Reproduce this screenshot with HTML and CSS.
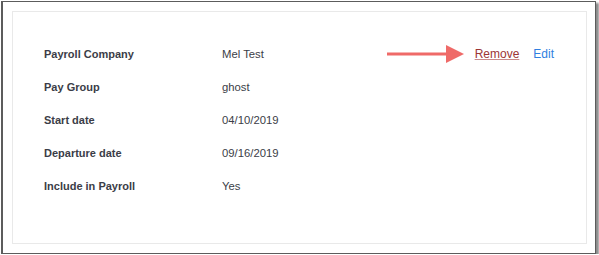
FILE: index.html
```html
<!DOCTYPE html>
<html>
<head>
<meta charset="utf-8">
<link rel="stylesheet" href="styles.css">
</head>
<body>
<div class="frame">
  <div class="card">
    <div class="row">
      <div class="label">Payroll Company</div>
      <div class="value">Mel Test</div>
      <div class="actions">
        <svg class="arrow" width="78" height="20" viewBox="0 0 78 20">
          <rect x="0" y="8.5" width="62" height="3" fill="#ef6a68"/>
          <polygon points="59,1 77,10 59,19" fill="#ef6a68"/>
        </svg>
        <a class="remove">Remove</a>
        <a class="edit">Edit</a>
      </div>
    </div>
    <div class="row">
      <div class="label">Pay Group</div>
      <div class="value">ghost</div>
    </div>
    <div class="row">
      <div class="label">Start date</div>
      <div class="value">04/10/2019</div>
    </div>
    <div class="row">
      <div class="label">Departure date</div>
      <div class="value">09/16/2019</div>
    </div>
    <div class="row">
      <div class="label">Include in Payroll</div>
      <div class="value">Yes</div>
    </div>
  </div>
</div>
</body>
</html>
```
FILE: styles.css
```css
html, body {
  margin: 0;
  padding: 0;
  background: #fff;
}
body {
  font-family: "Liberation Sans", Arial, sans-serif;
  font-size: 12px;
  color: #3b3d47;
}
.frame {
  box-sizing: border-box;
  margin: 1px 0 0 1px;
  width: 595px;
  height: 253px;
  border: 1px solid #5c5c5c;
  border-left-width: 2px;
  box-shadow: 3px 2px 2px rgba(0, 0, 0, 0.45);
  padding: 9px 8px 9px 9px;
  display: flex;
}
.card {
  flex: 1;
  border: 1px solid #e9e9e9;
  padding: 25px 32px 0 31px;
  display: flex;
  flex-direction: column;
}
.row {
  display: flex;
  align-items: center;
  height: 33px;
}
.label {
  width: 178px;
  font-weight: bold;
  font-size: 11px;
  color: #3b3d47;
}
.value {
  font-size: 11.3px;
  color: #3b3d47;
}
.actions {
  margin-left: auto;
  display: flex;
  align-items: center;
  gap: 14px;
  position: relative;
}
.arrow {
  position: absolute;
  left: -88px;
  top: 50%;
  margin-top: -10px;
}
.remove {
  color: #9c3535;
  text-decoration: underline;
  text-decoration-color: #c98a8a;
}
.edit {
  color: #2f7fe0;
}
```
